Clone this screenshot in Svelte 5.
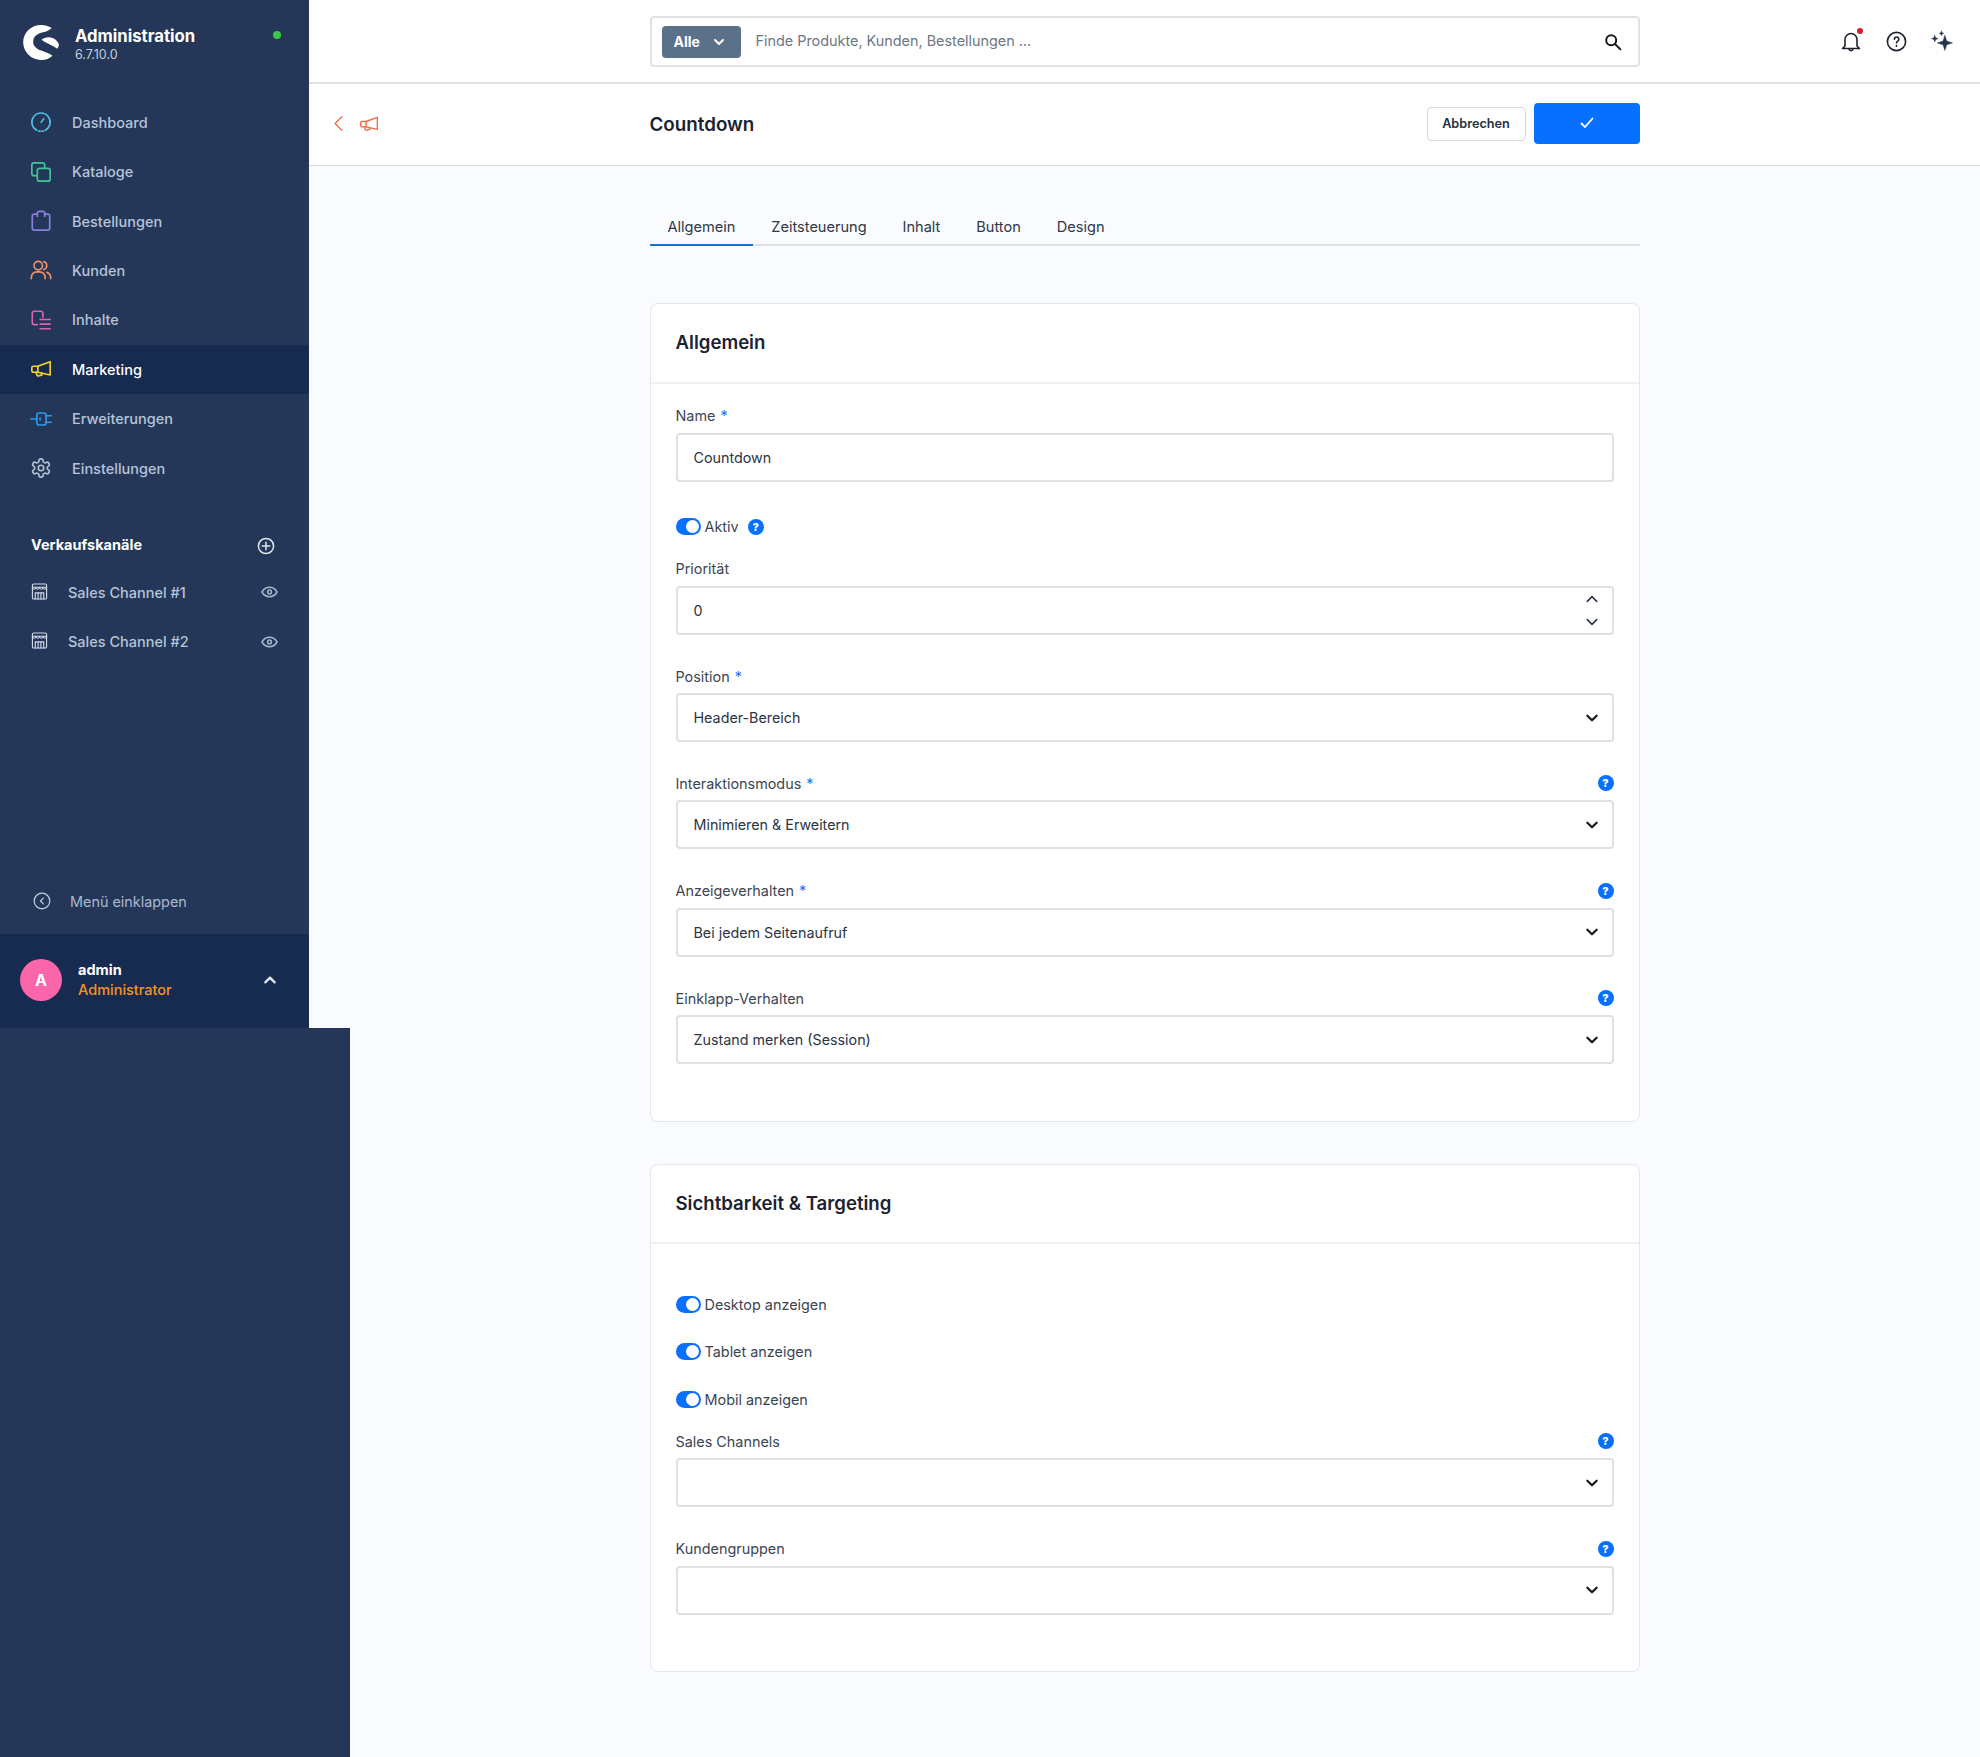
<script>
  const nav = [
    { label: 'Dashboard', icon: 'gauge', color: '#4dbfe0' },
    { label: 'Kataloge', icon: 'copy', color: '#3fc796' },
    { label: 'Bestellungen', icon: 'bag', color: '#8b80dc' },
    { label: 'Kunden', icon: 'users', color: '#ee9169' },
    { label: 'Inhalte', icon: 'content', color: '#d963b3' },
    { label: 'Marketing', icon: 'mega', color: '#f6d51f', active: true },
    { label: 'Erweiterungen', icon: 'plug', color: '#2a9bf0' },
    { label: 'Einstellungen', icon: 'gear', color: '#b3c0d4' }
  ];
  const tabs = ['Allgemein', 'Zeitsteuerung', 'Inhalt', 'Button', 'Design'];
  const selects = [
    { label: 'Position', req: true, value: 'Header-Bereich' },
    { label: 'Interaktionsmodus', req: true, help: true, value: 'Minimieren & Erweitern' },
    { label: 'Anzeigeverhalten', req: true, help: true, value: 'Bei jedem Seitenaufruf' },
    { label: 'Einklapp-Verhalten', help: true, value: 'Zustand merken (Session)' }
  ];
</script>

{#snippet chev(cls)}
  <svg class={cls} viewBox="0 0 12 12" aria-hidden="true"><path d="M2 4l4 4 4-4" /></svg>
{/snippet}

{#snippet navIcon(name)}
  <svg class="nav-icon" viewBox="0 0 24 24" aria-hidden="true">
    {#if name === 'gauge'}
      <path d="M7.4 21.1A10 10 0 1 1 16.6 21.1" /><path d="M12.2 12.4l2.8-4" /><path d="M9.5 22h5" stroke-dasharray="1.5 2" />
    {:else if name === 'copy'}
      <rect x="2" y="2" width="14" height="14" rx="2.5" /><rect x="8" y="8" width="14" height="14" rx="2.5" fill="#243758" />
    {:else if name === 'bag'}
      <path d="M8 4.500H4.500A2 2 0 0 0 2.500 6.500V20a2 2 0 0 0 2 2h15a2 2 0 0 0 2-2V6.500a2 2 0 0 0-2-2H16" /><path d="M8 7V3.500a2 2 0 0 1 2-2h4a2 2 0 0 1 2 2V7" />
    {:else if name === 'users'}
      <circle cx="9" cy="7.200" r="4.600" /><path d="M1.500 21.500v-1.500a6 6 0 0 1 6-6h3a6 6 0 0 1 6 6v1.500" /><path d="M15 2.800a4.600 4.600 0 0 1 0 8.800" /><path d="M18.500 14.600a6 6 0 0 1 4 5.400v1.500" />
    {:else if name === 'content'}
      <path d="M14 9V4.500a2 2 0 0 0-2-2H4.500a2 2 0 0 0-2 2V15a2 2 0 0 0 2 2H8" /><path d="M11 11.500h11M11 16.500h11M11 21.500h11" />
    {:else if name === 'mega'}
      <path d="M22 4v14.500L8.500 15.500H3.500a1.500 1.500 0 0 1-1.500-1.500v-3.500a1.500 1.500 0 0 1 1.500-1.500h5z" /><path d="M8.500 9v6.500" /><path d="M6.500 15.500l1 3a1.500 1.500 0 0 0 2 1l3.500-1-.5-2" />
    {:else if name === 'plug'}
      <rect x="7.500" y="5.500" width="10" height="13" rx="2.500" /><path d="M1 12h6.500M17.500 8.500H23M17.500 15.500H23" /><path d="M11 11v2" />
    {:else}
      <path d="M12.220 2h-.44a2 2 0 0 0-2 2v.18a2 2 0 0 1-1 1.730l-.43.25a2 2 0 0 1-2 0l-.15-.08a2 2 0 0 0-2.730.73l-.22.38a2 2 0 0 0 .73 2.730l.15.1a2 2 0 0 1 1 1.720v.51a2 2 0 0 1-1 1.740l-.15.09a2 2 0 0 0-.73 2.730l.22.38a2 2 0 0 0 2.730.73l.15-.08a2 2 0 0 1 2 0l.43.25a2 2 0 0 1 1 1.730V20a2 2 0 0 0 2 2h.44a2 2 0 0 0 2-2v-.18a2 2 0 0 1 1-1.730l.43-.25a2 2 0 0 1 2 0l.15.08a2 2 0 0 0 2.730-.73l.22-.39a2 2 0 0 0-.73-2.730l-.15-.08a2 2 0 0 1-1-1.740v-.5a2 2 0 0 1 1-1.740l.15-.09a2 2 0 0 0 .73-2.730l-.22-.38a2 2 0 0 0-2.730-.73l-.15.08a2 2 0 0 1-2 0l-.43-.25a2 2 0 0 1-1-1.730V4a2 2 0 0 0-2-2z" /><circle cx="12" cy="12" r="3" />
    {/if}
  </svg>
{/snippet}

{#snippet store()}
  <svg class="store" viewBox="0 0 18 18" aria-hidden="true">
    <rect x="1.500" y="1" width="15" height="16" rx="1.500" /><path d="M1.500 4.500h15" /><path d="M1.500 4.500c.5 2.800 3.300 2.800 3.750 0 .5 2.800 3.250 2.800 3.750 0 .5 2.800 3.250 2.800 3.750 0 .45 2.800 3.250 2.800 3.750 0" /><path d="M4.500 17v-6.500h9V17M7.500 10.500V17M10.500 10.500V17" />
  </svg>
{/snippet}

{#snippet eye()}
  <svg class="eye" viewBox="0 0 18 12" aria-hidden="true"><path d="M1 6c2-3.400 4.800-5 8-5s6 1.600 8 5c-2 3.400-4.800 5-8 5S3 9.400 1 6z" /><circle cx="9" cy="6" r="2" /></svg>
{/snippet}

{#snippet help()}
  <span class="help">?</span>
{/snippet}

{#snippet toggle(label, withHelp)}
  <div class="switch">
    <span class="track"><span class="thumb"></span></span>
    <span class="switch-label">{label}</span>
    {#if withHelp}<span class="switch-help">{@render help()}</span>{/if}
  </div>
{/snippet}

{#snippet labelRow(label, req, hasHelp)}
  <div class="label-row">
    <span class="label">{label}{#if req}<span class="req">*</span>{/if}</span>
    {#if hasHelp}{@render help()}{/if}
  </div>
{/snippet}

{#snippet selectField(item)}
  <div class="field">
    {@render labelRow(item.label, item.req, item.help)}
    <div class="input">
      <span>{item.value ?? ''}</span>
      {@render chev('select-chev')}
    </div>
  </div>
{/snippet}

<div class="shell">
  <aside class="sidebar">
    <div class="brand">
      <svg class="logo" viewBox="0 0 107 105" aria-hidden="true">
        <path d="M86 9C76 3 66 0 54 0 24 0 0 23 0 52c0 29 24 53 54 53 14 0 25-5 34-13-10-8-22-10-36-16-14-6-22-14-22-26 0-14 12-25 30-28 10-2 18-7 26-13z" />
        <path d="M55 44c7-6 23-10 35-4 10 5 16 12 17 18 0 6-2 10-5 13C92 62 72 56 55 44z" />
      </svg>
      <div class="brand-text">
        <strong>Administration</strong>
        <small>6.7.10.0</small>
      </div>
      <span class="status"></span>
    </div>

    <nav class="menu">
      {#each nav as item}
        <div class="menu-item" class:active={item.active} style="--c:{item.color}">
          {@render navIcon(item.icon)}
          <span>{item.label}</span>
        </div>
      {/each}
    </nav>

    <div class="channels-head">
      <span>Verkaufskanäle</span>
      <svg class="plus" viewBox="0 0 18 18" aria-hidden="true"><circle cx="9" cy="9" r="7.600" /><path d="M9 5.200v7.600M5.200 9h7.600" /></svg>
    </div>
    <div class="channel">{@render store()}<span>Sales Channel #1</span>{@render eye()}</div>
    <div class="channel">{@render store()}<span>Sales Channel #2</span>{@render eye()}</div>

    <div class="collapse">
      <svg class="collapse-icon" viewBox="0 0 18 18" aria-hidden="true"><circle cx="9" cy="9" r="7.800" /><path d="M10.300 6.200L7.500 9l2.800 2.800" /></svg>
      <span>Menü einklappen</span>
    </div>

    <div class="user">
      <span class="avatar">A</span>
      <div class="user-text"><strong>admin</strong><span>Administrator</span></div>
      <svg class="user-chev" viewBox="0 0 12 12" aria-hidden="true"><path d="M2 8l4-4 4 4" /></svg>
    </div>
  </aside>

  <div class="main">
    <header class="topbar">
      <div class="column">
        <div class="search">
          <span class="scope">Alle {@render chev('scope-chev')}</span>
          <span class="placeholder">Finde Produkte, Kunden, Bestellungen ...</span>
          <svg class="search-icon" viewBox="0 0 18 18" aria-hidden="true"><circle cx="7.200" cy="7.200" r="5" /><path d="M11 11l5.400 5.400" /></svg>
        </div>
      </div>
      <div class="top-actions">
        <span class="bell">
          <svg viewBox="0 0 24 24" aria-hidden="true"><path d="M6 16.500V10a6 6 0 0 1 12 0v6.500l2.500 2.500h-17z" /><path d="M10 19.500c.2 2.200 3.800 2.200 4 0" /></svg>
          <i></i>
        </span>
        <svg class="qmark" viewBox="0 0 24 24" aria-hidden="true"><circle cx="12" cy="12" r="9.500" /><path d="M9.800 9.600a2.300 2.300 0 1 1 3.500 2c-.9.500-1.300 1-1.300 2" /><path d="M12 16.300v.6" /></svg>
        <svg class="spark" viewBox="0 0 24 24" aria-hidden="true"><path d="M15.500 5.500l2 6 6 2-6 2-2 6-2-6-6-2 6-2zM5 5.500l1 2.500 2.500 1L6 10l-1 2.500L4 10 1.500 9 4 8zM12 1l.7 1.800 1.800.7-1.800.7L12 6l-.7-1.800-1.800-.7 1.800-.7z" /></svg>
      </div>
    </header>

    <div class="smartbar">
      <div class="crumbs">
        <svg class="back" viewBox="0 0 12 20" aria-hidden="true"><path d="M10 2L2 10l8 8" /></svg>
        <svg class="crumb-icon" viewBox="0 0 24 24" aria-hidden="true"><path d="M22 4v14.500L8.500 15.500H3.500a1.500 1.500 0 0 1-1.500-1.500v-3.500a1.500 1.500 0 0 1 1.500-1.500h5z" /><path d="M8.500 9v6.500" /><path d="M6.500 15.500l1 3a1.500 1.500 0 0 0 2 1l3.500-1-.5-2" /></svg>
      </div>
      <div class="column smart-inner">
        <h1>Countdown</h1>
        <div class="smart-actions">
          <button class="cancel" type="button">Abbrechen</button>
          <button class="save" type="button" aria-label="Speichern">
            <svg viewBox="0 0 14 12" aria-hidden="true"><path d="M1.500 6.500L5 10l7.500-8.500" /></svg>
          </button>
        </div>
      </div>
    </div>

    <div class="column page">
      <div class="tabs">
        {#each tabs as tab, i}
          <span class="tab" class:active={i === 0}>{tab}</span>
        {/each}
      </div>

      <section class="card">
        <h2>Allgemein</h2>
        <div class="card-body">
          <div class="field">
            {@render labelRow('Name', true, false)}
            <div class="input"><span>Countdown</span></div>
          </div>
          {@render toggle('Aktiv', true)}
          <div class="field">
            {@render labelRow('Priorität', false, false)}
            <div class="input">
              <span>0</span>
              <div class="stepper">
                <svg viewBox="0 0 12 12" aria-hidden="true"><path d="M2 8l4-4 4 4" /></svg>
                <svg viewBox="0 0 12 12" aria-hidden="true"><path d="M2 4l4 4 4-4" /></svg>
              </div>
            </div>
          </div>
          {#each selects as item}
            {@render selectField(item)}
          {/each}
        </div>
      </section>

      <section class="card second">
        <h2>Sichtbarkeit &amp; Targeting</h2>
        <div class="card-body">
          <div class="toggles">
            {@render toggle('Desktop anzeigen', false)}
            {@render toggle('Tablet anzeigen', false)}
            {@render toggle('Mobil anzeigen', false)}
          </div>
          {@render selectField({ label: 'Sales Channels', help: true })}
          {@render selectField({ label: 'Kundengruppen', help: true })}
        </div>
      </section>
    </div>
  </div>

  <div class="underlay"></div>
</div>

<style>
  :global(body) {
    margin: 0;
    font-family: Inter, "Liberation Sans", sans-serif;
    color: #2b3445;
    background: #fafbfe;
  }
  * { box-sizing: border-box; }
  svg { display: block; flex: none; fill: none; stroke-linecap: round; stroke-linejoin: round; }

  .shell { position: relative; display: flex; min-height: 1757px; background: #fafbfe; }
  .underlay { position: absolute; left: 0; top: 1028px; bottom: 0; width: 350px; background: #243758; }

  .sidebar { width: 309px; height: 1028px; flex: none; background: #243758; display: flex; flex-direction: column; }
  .brand { display: flex; align-items: flex-start; height: 97.600px; padding: 25px 28px 0 23px; }
  .logo { width: 36px; height: 35px; fill: #fff; }
  .brand-text { display: flex; flex-direction: column; margin-left: 16px; margin-top: 1px; color: #fff; flex: 1; }
  .brand-text strong { font-size: 16.700px; font-weight: 700; line-height: 20px; }
  .brand-text small { font-size: 12.500px; line-height: 17px; color: #c3cedd; }
  .status { width: 8px; height: 8px; border-radius: 50%; background: #37c845; margin-top: 6px; }

  .menu { display: flex; flex-direction: column; }
  .menu-item { height: 49.400px; display: flex; align-items: center; padding-left: 30px; gap: 20px; color: #b6c4d9; font-size: 14.500px; font-weight: 500; }
  .menu-item.active { background: #172a50; color: #fff; font-weight: 500; }
  .nav-icon { width: 22px; height: 22px; stroke: var(--c); stroke-width: 1.800; }

  .channels-head { display: flex; align-items: center; justify-content: space-between; margin-top: 41px; padding: 0 34px 0 31px; height: 22px; color: #fff; font-size: 14.500px; font-weight: 700; }
  .plus { width: 18px; height: 18px; stroke: #dfe6f0; stroke-width: 1.500; margin-top: 2px; }
  .channel { display: flex; align-items: center; height: 49.300px; padding: 0 31px 0 31px; color: #b6c4d9; font-size: 14.500px; font-weight: 500; }
  .channels-head + .channel { margin-top: 12px; }
  .channel span { flex: 1; margin-left: 20px; }
  .store { width: 17px; height: 17px; stroke: #d3dce8; stroke-width: 1.200; margin-top: -2px; }
  .eye { width: 17px; height: 12px; stroke: #a9b7cc; stroke-width: 1.600; }

  .collapse { display: flex; align-items: center; gap: 19px; margin-top: auto; height: 34px; margin-bottom: 16px; padding-left: 33px; color: #a9b8ce; font-size: 14.400px; font-weight: 400; }
  .collapse-icon { width: 18px; height: 18px; stroke: #c2cddd; stroke-width: 1.200; }

  .user { height: 94px; background: #172a50; display: flex; align-items: center; padding: 0 32px 2px 20px; }
  .avatar { width: 42px; height: 42px; border-radius: 50%; background: #fb65a9; color: #fff; display: flex; align-items: center; justify-content: center; font-size: 16px; font-weight: 700; }
  .user-text { display: flex; flex-direction: column; flex: 1; margin-left: 16px; font-size: 14.500px; line-height: 20px; }
  .user-text strong { color: #fff; font-weight: 700; }
  .user-text span { color: #f5951f; font-weight: 500; }
  .user-chev { width: 14px; height: 14px; stroke: #dfe6f0; stroke-width: 2; }

  .main { flex: 1; min-width: 0; display: flex; flex-direction: column; }
  .column { width: 990px; margin: 0 auto; }

  .topbar { position: relative; height: 84px; background: #fff; border-bottom: 2px solid #dfe2e6; display: flex; align-items: flex-start; padding-top: 16px; }
  .search { height: 51px; border: 2px solid #dfe2e6; border-radius: 4px; background: #fff; display: flex; align-items: center; padding: 0 16px 0 10px; }
  .scope { width: 79px; height: 32px; background: #5b7089; border-radius: 4px; color: #fff; font-size: 14px; font-weight: 700; display: flex; align-items: center; padding-left: 12px; gap: 13px; }
  :global(.scope-chev) { width: 12px; height: 12px; stroke: #fff; stroke-width: 2; }
  .placeholder { margin-left: 15px; flex: 1; font-size: 14.400px; color: #6d7683; padding-bottom: 2px; }
  .search-icon { width: 18px; height: 18px; stroke: #15191f; stroke-width: 2; }
  .top-actions { position: absolute; right: 27px; top: 29px; display: flex; align-items: center; gap: 22px; }
  .bell { position: relative; display: block; width: 24px; height: 25px; }
  .bell svg { width: 24px; height: 25px; stroke: #1d2430; stroke-width: 1.600; }
  .bell i { position: absolute; top: -1px; right: 0; width: 6px; height: 6px; border-radius: 50%; background: #e0162b; }
  .qmark { width: 23px; height: 23px; stroke: #1d2430; stroke-width: 1.700; }
  .spark { width: 23px; height: 23px; fill: #25344d; stroke: #25344d; stroke-width: .4; }

  .smartbar { position: relative; height: 82px; background: #fff; border-bottom: 1px solid #d3d7de; display: flex; align-items: center; }
  .crumbs { position: absolute; left: 24px; top: 0; bottom: 2px; display: flex; align-items: center; gap: 15px; }
  .back { width: 11px; height: 17px; stroke: #f16b45; stroke-width: 1.500; }
  .crumb-icon { width: 20px; height: 20px; stroke: #f16b45; stroke-width: 1.600; }
  .smart-inner { display: flex; align-items: center; justify-content: space-between; }
  h1 { margin: 0; font-size: 18.800px; font-weight: 600; color: #1b2230; }
  .smart-actions { display: flex; align-items: center; gap: 8px; margin-top: -2px; }
  .cancel { width: 99px; height: 34px; background: #fff; border: 1px solid #d3d7de; border-radius: 4px; font: 600 12.700px Inter, sans-serif; color: #25303f; padding: 0 0 1px; }
  .save { width: 106px; height: 41px; background: #0870ff; border: 0; border-radius: 4px; display: flex; align-items: center; justify-content: center; padding: 0 0 2px; }
  .save svg { width: 14px; height: 12px; stroke: #fff; stroke-width: 1.800; }

  .page { display: flex; flex-direction: column; padding-top: 42px; padding-bottom: 84px; }
  .tabs { display: flex; border-bottom: 2px solid #dfe2e7; height: 38px; }
  .tab { height: 38px; padding: 10px 18px 0; font-size: 14.550px; color: #2e3848; white-space: nowrap; }
  .tab.active { border-bottom: 2px solid #1a6de0; }

  .card { margin-top: 57px; background: #fff; border: 1px solid #e3e6eb; border-radius: 8px; }
  .card.second { margin-top: 42px; }
  h2 { margin: 0; height: 79.500px; padding: 0 25px 1px; display: flex; align-items: center; border-bottom: 2px solid #eef0f3; font-size: 18.600px; font-weight: 600; color: #1b2230; }
  .card-body { padding: 22px 25px 25px; }
  .field { margin-bottom: 31.400px; }
  .label-row { height: 20px; margin-bottom: 7px; display: flex; align-items: center; justify-content: space-between; font-size: 14.400px; color: #3b4554; }
  .req { color: #2a73e8; margin-left: 5px; }
  .input { height: 49px; border: 2px solid #dde0e5; border-radius: 4px; background: #fff; display: flex; align-items: center; justify-content: space-between; padding: 0 16px; font-size: 14.300px; color: #2b3445; }
  :global(.select-chev) { width: 14px; height: 14px; stroke: #15191f; stroke-width: 1.900; margin-right: -3px; }
  .stepper { display: flex; flex-direction: column; gap: 9px; margin-right: -3px; }
  .stepper svg { width: 14px; height: 14px; stroke: #2e3848; stroke-width: 1.400; }
  .help { width: 16px; height: 16px; border-radius: 50%; background: #0870ff; color: #fff; font-size: 11px; font-weight: 800; line-height: 16px; text-align: center; display: block; }
  .switch { height: 20px; margin: 35.200px 0 22px; display: flex; align-items: center; font-size: 14.400px; color: #3b4554; }
  .track { position: relative; width: 25px; height: 17px; border-radius: 9px; background: #0870ff; display: block; margin-right: 4px; }
  .thumb { position: absolute; right: 2px; top: 2px; width: 13px; height: 13px; border-radius: 50%; background: #fff; }
  .switch-help { margin-left: 9px; }
  .toggles { padding-top: 28px; }
  .toggles .switch { margin: 0 0 27.500px; }
  .toggles .switch:last-child { margin-bottom: 22px; }
</style>
